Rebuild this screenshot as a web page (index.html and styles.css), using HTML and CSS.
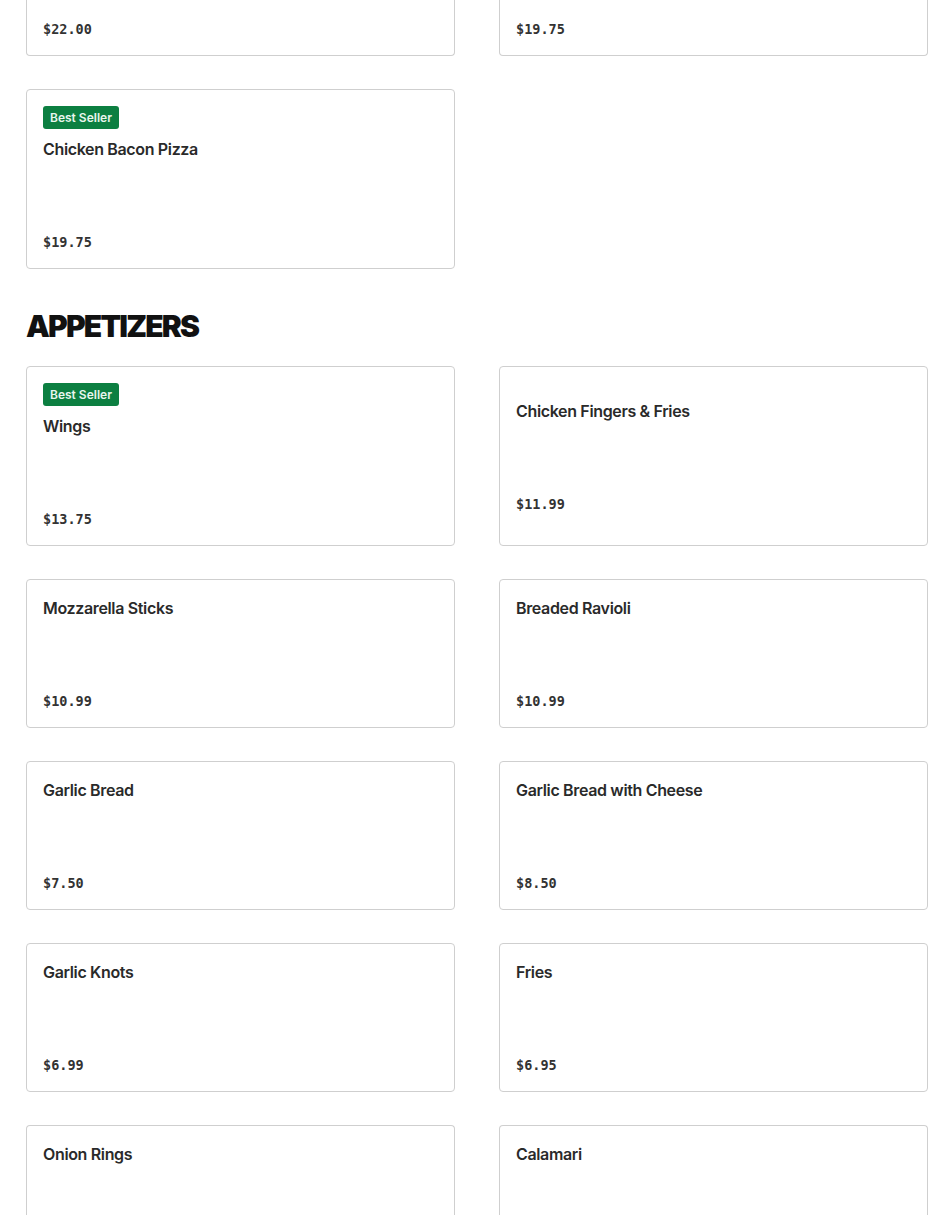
FILE: index.html
```html
<!DOCTYPE html>
<html lang="en">
<head>
<meta charset="utf-8">
<title>Menu</title>
<link rel="stylesheet" href="styles.css">
</head>
<body>
<main class="menu">
  <section class="section">
    <div class="grid">
      <div class="card card--cut"><div class="card-body"><div class="price">$22.00</div></div></div>
      <div class="card card--cut"><div class="card-body"><div class="price">$19.75</div></div></div>
      <div class="card">
        <div class="card-body">
          <span class="badge">Best Seller</span>
          <div class="title">Chicken Bacon Pizza</div>
          <div class="desc"></div>
          <div class="price">$19.75</div>
        </div>
      </div>
    </div>
  </section>

  <section class="section">
    <h2 class="section-title">APPETIZERS</h2>
    <div class="grid">
      <div class="card">
        <div class="card-body">
          <span class="badge">Best Seller</span>
          <div class="title">Wings</div>
          <div class="desc"></div>
          <div class="price">$13.75</div>
        </div>
      </div>
      <div class="card">
        <div class="card-body">
          <div class="title">Chicken Fingers &amp; Fries</div>
          <div class="desc"></div>
          <div class="price">$11.99</div>
        </div>
      </div>
      <div class="card">
        <div class="card-body">
          <div class="title">Mozzarella Sticks</div>
          <div class="desc"></div>
          <div class="price">$10.99</div>
        </div>
      </div>
      <div class="card">
        <div class="card-body">
          <div class="title">Breaded Ravioli</div>
          <div class="desc"></div>
          <div class="price">$10.99</div>
        </div>
      </div>
      <div class="card">
        <div class="card-body">
          <div class="title">Garlic Bread</div>
          <div class="desc"></div>
          <div class="price">$7.50</div>
        </div>
      </div>
      <div class="card">
        <div class="card-body">
          <div class="title">Garlic Bread with Cheese</div>
          <div class="desc"></div>
          <div class="price">$8.50</div>
        </div>
      </div>
      <div class="card">
        <div class="card-body">
          <div class="title">Garlic Knots</div>
          <div class="desc"></div>
          <div class="price">$6.99</div>
        </div>
      </div>
      <div class="card">
        <div class="card-body">
          <div class="title">Fries</div>
          <div class="desc"></div>
          <div class="price">$6.95</div>
        </div>
      </div>
      <div class="card card--last">
        <div class="card-body">
          <div class="title">Onion Rings</div>
        </div>
      </div>
      <div class="card card--last">
        <div class="card-body">
          <div class="title">Calamari</div>
        </div>
      </div>
    </div>
  </section>
</main>
</body>
</html>
```
FILE: styles.css
```css
* { box-sizing: border-box; }
html, body { margin: 0; padding: 0; background: #fff; }
body {
  font-family: Inter, "Noto Sans", sans-serif;
  color: #2a2a2a;
  overflow: hidden;
}
.menu {
  width: 902px;
  margin-left: 26px;
}
.section { margin-bottom: 40px; }
.section-title {
  margin: 0 0 23px;
  font-family: Inter, sans-serif;
  font-weight: 900;
  font-size: 30px;
  line-height: 34px;
  letter-spacing: -1.8px;
  color: #111;
}
.grid {
  display: grid;
  grid-template-columns: 429px 429px;
  column-gap: 44px;
  row-gap: 33px;
}
.card {
  border: 1px solid #cfcfcf;
  border-radius: 4px;
  display: flex;
  align-items: center;
  background: #fff;
}
.card--cut {
  border-top: 0;
  border-top-left-radius: 0;
  border-top-right-radius: 0;
}
.card--cut .card-body { padding-top: 19px; }
.card--last {
  align-items: flex-start;
  height: 120px;
  border-bottom: 0;
  border-bottom-left-radius: 0;
  border-bottom-right-radius: 0;
}
.card-body {
  width: 100%;
  padding: 16px;
  display: flex;
  flex-direction: column;
  align-items: flex-start;
}
.badge {
  display: inline-block;
  background: #0c7f41;
  color: #e9f6ee;
  font-size: 12px;
  font-weight: 600;
  line-height: 23px;
  height: 23px;
  padding: 0 7px;
  border-radius: 3px;
  margin-bottom: 8px;
}
.title {
  font-size: 16px;
  font-weight: 600;
  line-height: 24px;
  letter-spacing: -0.35px;
  color: #2a2a2a;
}
.desc { height: 71px; }
.price {
  font-family: "DejaVu Sans Mono", "Liberation Mono", monospace;
  font-weight: bold;
  font-size: 13.5px;
  line-height: 20px;
  color: #333;
}
```
